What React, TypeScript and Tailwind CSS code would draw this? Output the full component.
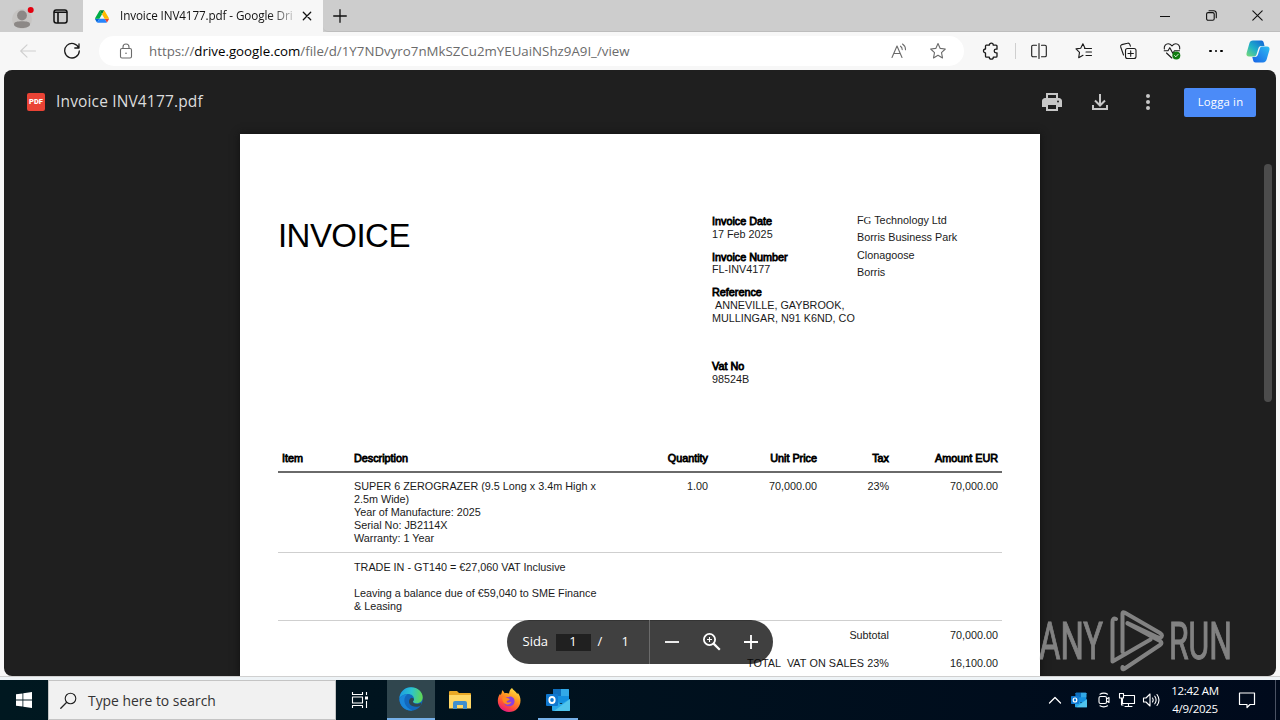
import React from "react";

interface IconProps {
  size?: number;
  box?: string;
  className?: string;
  children: React.ReactNode;
}

const Icon = ({ size = 18, box = "0 0 18 18", className = "", children }: IconProps) => (
  <svg
    width={size}
    height={size}
    viewBox={box}
    fill="none"
    stroke="currentColor"
    strokeWidth={1.1}
    strokeLinecap="round"
    strokeLinejoin="round"
    className={`shrink-0 ${className}`}
  >
    {children}
  </svg>
);

const STAR = "M9 1.6l2.2 4.8 5.1.6-3.8 3.6 1 5.3L9 13.3l-4.500 2.6 1-5.300L1.700 7l5.100-.6z";

const DriveLogo = () => (
  <svg width="14" height="13" viewBox="0 0 87.300 78" className="shrink-0">
    <path d="M6.600 66.850l3.850 6.650c.8 1.400 1.950 2.500 3.300 3.300l13.750-23.800H0c0 1.550.4 3.100 1.200 4.500z" fill="#0066da" />
    <path d="M43.650 25L29.900 1.200c-1.350.8-2.500 1.900-3.300 3.300L1.200 48.500A9 9 0 0 0 0 53h27.500z" fill="#00ac47" />
    <path d="M73.550 76.800c1.350-.8 2.500-1.900 3.300-3.300l1.600-2.750L86.100 57.500c.8-1.400 1.200-2.950 1.200-4.500H59.800l5.850 11.500z" fill="#ea4335" />
    <path d="M43.650 25L57.400 1.200C56.050.4 54.500 0 52.900 0H34.400c-1.600 0-3.150.45-4.500 1.200z" fill="#00832d" />
    <path d="M59.800 53H27.500L13.750 76.800c1.350.8 2.900 1.200 4.500 1.200h50.800c1.600 0 3.150-.45 4.500-1.200z" fill="#2684fc" />
    <path d="M73.400 26.500L60.700 4.500c-.8-1.400-1.950-2.500-3.300-3.300L43.650 25 59.800 53h27.450c0-1.550-.4-3.100-1.200-4.500z" fill="#ffba00" />
  </svg>
);

const OutlookLogo = ({ width, height }: { width: number; height: number }) => (
  <svg width={width} height={height} viewBox="0 0 24 22" className="shrink-0">
    <rect x="7" y="0" width="16" height="14" rx="1" fill="#1490df" />
    <path d="M7 1a1 1 0 0 1 1-1h7v7H7z" fill="#0f6fbe" />
    <path d="M15 0h7a1 1 0 0 1 1 1v6h-8z" fill="#32a9e7" />
    <path d="M6 10l9 5 9-5v11a1 1 0 0 1-1 1H7a1 1 0 0 1-1-1z" fill="#28a8ea" />
    <path d="M24 10L8 22h15a1 1 0 0 0 1-1z" fill="#50c4ec" />
    <rect x="0" y="5" width="12" height="12" rx="1" fill="#0f78d0" />
    <ellipse cx="6" cy="11" rx="2.700" ry="3" fill="none" stroke="#fff" strokeWidth="1.800" />
  </svg>
);

const TabStrip = () => (
  <div className="flex h-8 items-stretch bg-[#cdcdcd] text-[#111]">
    <div className="flex w-[44px] items-center justify-center">
      <svg width="22" height="22" viewBox="0 0 22 22" className="mt-[3px] ml-[2px]">
        <circle cx="10" cy="12" r="10" fill="#c6c4c2" />
        <circle cx="10" cy="8.500" r="4.900" fill="#8c8886" />
        <path d="M2 17.500c0-2.600 3-3.200 8-3.200s8 .6 8 3.200c0 2-4 3.500-8 3.500s-8-1.500-8-3.500z" fill="#8c8886" />
        <circle cx="18.700" cy="3.100" r="3" fill="#e3000f" />
      </svg>
    </div>
    <div className="flex w-[39px] items-center rounded-br-[5px] pl-[9px]">
      <Icon size={15} box="0 0 15 15">
        <rect x="1" y="1" width="13" height="13" rx="2.200" strokeWidth="1.500" />
        <path d="M1.500 3.200h12M5 4v9.500" strokeWidth="1.600" />
      </Icon>
    </div>
    <div className="flex w-[240px] items-center bg-[#f7f7f7] pl-[12px]">
      <DriveLogo />
      <div className="ml-[11px] w-[174px] whitespace-nowrap bg-gradient-to-r from-[#111] from-85% to-[#c8c8c8] bg-clip-text font-['Open_Sans',sans-serif] text-[11.700px] tracking-[-0.110px] text-transparent">
        Invoice INV4177.pdf - Google Dri
      </div>
      <Icon size={10} box="0 0 10 10" className="ml-[8px]">
        <path d="M1.300 1.300l7.400 7.400M8.700 1.300L1.300 8.700" strokeWidth="1.300" />
      </Icon>
    </div>
    <div className="flex flex-1 items-center rounded-bl-[5px] border-b border-[#bdbdbd] pl-[10px]">
      <Icon size={14} box="0 0 14 14">
        <path d="M7 .7v12.600M.7 7h12.600" strokeWidth="1.300" />
      </Icon>
    </div>
    <div className="flex items-center border-b border-[#bdbdbd]">
      <div className="flex w-[46px] justify-center">
        <Icon size={10} box="0 0 10 10"><path d="M0 5.500h10" /></Icon>
      </div>
      <div className="flex w-[46px] justify-center">
        <Icon size={11} box="0 0 11 11">
          <rect x=".6" y="2.600" width="7.600" height="7.600" rx="1.500" />
          <path d="M3 .8h4.700a2.500 2.500 0 0 1 2.600 2.500v4.500" />
        </Icon>
      </div>
      <div className="flex w-[46px] justify-center">
        <Icon size={11} box="0 0 11 11"><path d="M.8.8l9.400 9.400M10.200.8L.8 10.200" /></Icon>
      </div>
    </div>
  </div>
);

const Toolbar = () => (
  <div className="flex h-[38px] items-center bg-[#f7f7f7] text-[#1a1a1a]">
    <div className="flex w-[56px] justify-center text-[#cfcfcf]">
      <Icon><path d="M16.500 9H1.800M8 2.800L1.700 9 8 15.200" /></Icon>
    </div>
    <div className="flex w-[43px] pl-[7px]">
      <Icon><path d="M15.800 6A7.300 7.300 0 1 0 16.300 9M16 1.800V6h-4.200" strokeWidth="1.300" /></Icon>
    </div>
    <div className="flex h-[30px] w-[865px] items-center rounded-full bg-white text-[#6b6b6b]">
      <Icon size={16} box="0 0 16 16" className="ml-[19px]">
        <rect x="2.500" y="5.500" width="11" height="9.500" rx="1.500" />
        <path d="M5 5.500V4a3 3 0 0 1 6 0v1.500" />
        <circle cx="8" cy="10.300" r=".8" fill="currentColor" stroke="none" />
      </Icon>
      <div className="mt-px ml-[15px] flex-1 whitespace-nowrap font-['Open_Sans',sans-serif] text-[13.300px]">
        https://<span className="text-black">drive.google.com</span>/file/d/1Y7NDvyro7nMkSZCu2mYEUaiNShz9A9I_/view
      </div>
      <Icon className="mr-[21px]">
        <path d="M2 15.500L7 4l5 11.500M3.800 11.500h6.400M10.500 4.200c1.200.8 1.700 2 1.700 3.400M12.500 2c2 1.300 3 3.300 3 5.800" />
      </Icon>
      <Icon className="mr-[17px]"><path d={STAR} /></Icon>
    </div>
    <div className="flex w-[51px] justify-center pl-[3px]">
      <Icon>
        <path
          d="M4 3.200h3.300a2 2 0 0 1 4 0H14a1 1 0 0 1 1 1v3h-1a1.800 1.800 0 0 0 0 3.600h1v3.400a1 1 0 0 1-1 1h-2.700a2 2 0 0 1-4 0H4.500a1 1 0 0 1-1-1v-3.200a2 2 0 0 1 0-4V4.200a1 1 0 0 1 .5-1z"
          strokeWidth="1.300"
        />
      </Icon>
    </div>
    <div className="h-[16px] w-px bg-[#cfcfcf]" />
    <div className="flex w-[46px] justify-center">
      <Icon>
        <path d="M6.500 3.200H3a1.300 1.300 0 0 0-1.300 1.300v9A1.300 1.300 0 0 0 3 14.800h3.500M11.500 3.200H15a1.300 1.300 0 0 1 1.300 1.300v9a1.300 1.300 0 0 1-1.300 1.300h-3.500M9 1.500v15" />
      </Icon>
    </div>
    <div className="flex w-[44px] justify-center">
      <Icon>
        <path d="M10 6.300L7.900 1.700 5.700 6.300l-4.700.6 3.500 3.500-.8 5.300L8 13.300M9.500 6.500h7M11 10h5.500M11 13.500h5.500" />
      </Icon>
    </div>
    <div className="flex w-[44px] justify-center">
      <Icon>
        <rect x="6.500" y="6.500" width="10.500" height="10" rx="2" />
        <path d="M11.700 8.800v5.400M9 11.500h5.400M4.500 13L1.700 5a2 2 0 0 1 1.200-2.400l5.500-1.400a2 2 0 0 1 2.400 1.200l.6 1.800" />
      </Icon>
    </div>
    <div className="flex w-[44px] justify-center">
      <Icon>
        <path d="M1.300 7C.8 3.500 3 1.700 5.200 1.700 7 1.700 8 2.700 9 3.800c1-1.100 2-2.100 3.800-2.100C15 1.700 17.200 3.500 16.700 7M1.200 8.700H5l1.800-3 3 5.600 1.700-2.600h5M3.500 11L8.800 16" />
        <circle cx="13.300" cy="13.500" r="4" fill="#107c10" stroke="none" />
        <path d="M11.600 13.600l1.200 1.200 2.300-2.400" stroke="#fff" strokeWidth=".9" />
      </Icon>
    </div>
    <div className="flex w-[44px] justify-center gap-[2.500px]">
      <span className="size-[2.700px] rounded-full bg-black" />
      <span className="size-[2.700px] rounded-full bg-black" />
      <span className="size-[2.700px] rounded-full bg-black" />
    </div>
    <div className="flex flex-1 justify-center pr-[2px]">
      <svg width="24" height="23" viewBox="0 0 24 23">
        <defs>
          <linearGradient id="cpa" x1="0" y1="1" x2="1" y2="0">
            <stop offset="0" stopColor="#7bdc74" />
            <stop offset=".45" stopColor="#1fb0c8" />
            <stop offset="1" stopColor="#1260d8" />
          </linearGradient>
          <linearGradient id="cpb" x1="0" y1="1" x2="1" y2="0">
            <stop offset="0" stopColor="#1763e6" />
            <stop offset=".6" stopColor="#2597ee" />
            <stop offset="1" stopColor="#2cc0f0" />
          </linearGradient>
        </defs>
        <path d="M7 .6h8.500c1.300 0 2 1 2.300 2.300L18.500 6h-3c-2 0-2.700 1-3.300 3l-1.700 5.500c-.5 1.500-1.500 2-3 2H3c-2 0-3-1.500-2.400-3.600l2.600-9C3.900 1.600 5 .6 7 .6z" fill="url(#cpa)" />
        <path d="M17 22.500H9.500c-1.300 0-2-1-2.400-2.300L6.300 17h2.500c2 0 2.700-1 3.300-3l1.700-5.500c.5-1.500 1.300-2 2.800-2H21c2 0 3 1.500 2.400 3.600l-2.600 9c-.6 2.300-1.800 3.400-3.800 3.400z" fill="url(#cpb)" />
      </svg>
    </div>
  </div>
);

const ViewerHeader = () => (
  <div className="flex h-[64px] shrink-0 items-center text-[#d6d6d6]">
    <div className="ml-[23px] flex size-[18px] items-center justify-center rounded-[2px] bg-[#ea4335] font-['Roboto',sans-serif] text-[7.500px] font-black text-white">
      PDF
    </div>
    <div className="ml-[11px] flex-1 font-['Open_Sans',sans-serif] text-[15.500px] tracking-[0.150px] text-[#dcdcdc]">Invoice INV4177.pdf</div>
    <div className="flex w-[48px] justify-center">
      <svg width="24" height="24" viewBox="0 0 24 24" fill="#c7c7c7">
        <path d="M19 8h-1V3H6v5H5c-1.660 0-3 1.340-3 3v6h4v4h12v-4h4v-6c0-1.660-1.340-3-3-3zM8 5h8v3H8V5zm8 12v2H8v-4h8v2zm2-2v-2H6v2H4v-4c0-.55.45-1 1-1h14c.55 0 1 .45 1 1v4h-2z" />
        <path d="M3.500 9.500h17v3.500h-17zM3.500 12h3v3.500h-3zM17.500 12h3v3.500h-3z" />
        <circle cx="18" cy="11.500" r="1" fill="#1f1f1f" />
      </svg>
    </div>
    <div className="flex w-[48px] justify-center">
      <svg width="24" height="24" viewBox="0 0 24 24" fill="none" stroke="#c7c7c7" strokeWidth="2">
        <path d="M12 4v11M7 10.500l5 5 5-5M5 15v4h14v-4" />
      </svg>
    </div>
    <div className="flex w-[48px] flex-col items-center gap-[2px]">
      <span className="size-[4px] rounded-full bg-[#c7c7c7]" />
      <span className="size-[4px] rounded-full bg-[#c7c7c7]" />
      <span className="size-[4px] rounded-full bg-[#c7c7c7]" />
    </div>
    <div className="mr-[20px] ml-[12px] flex h-[29px] w-[72px] items-center justify-center rounded-[2px] bg-[#4b8bf8] pl-px font-['Open_Sans',sans-serif] text-[11.300px] tracking-[0.200px] text-white">
      Logga in
    </div>
  </div>
);

const Label = ({ children }: { children: React.ReactNode }) => (
  <div className="[-webkit-text-stroke:0.8px_#000]">{children}</div>
);

const COLS = "grid grid-cols-[76px_255px_99px_109px_72px_109px] pr-[4px]";

const Invoice = () => (
  <div className="h-[542px] w-[800px] overflow-hidden bg-white pr-[38px] pl-[38px] font-['Liberation_Sans',Arial,sans-serif] text-[10.800px] leading-[13px] whitespace-nowrap text-[#1a1a1a]">
    <div className="flex h-[317px]">
      <div className="w-[434px] pt-[82px] text-[33px] leading-[40px] tracking-[-0.550px] text-black">INVOICE</div>
      <div className="w-[145px] pt-[81px]">
        <div className="h-[35px]">
          <Label>Invoice Date</Label>
          17 Feb 2025
        </div>
        <div className="h-[36px]">
          <div className="relative top-px"><Label>Invoice Number</Label></div>
          FL-INV4177
        </div>
        <div className="h-[74px]">
          <Label>Reference</Label>
          <div className="pl-[3px]">ANNEVILLE, GAYBROOK,</div>
          MULLINGAR, N91 K6ND, CO
        </div>
        <Label>Vat No</Label>
        98524B
      </div>
      <div className="pt-[78px] leading-[17.400px]">
        <div>F<span className="font-['Liberation_Serif',serif]">G</span> Technology Ltd</div>
        <div>Borris Business Park</div>
        <div>Clonagoose</div>
        <div>Borris</div>
      </div>
    </div>
    <div className={`${COLS} h-[22px] border-b-2 border-[#6a6a6a] pt-px text-right`}>
      <div className="pl-[4px] text-left"><Label>Item</Label></div>
      <div className="text-left"><Label>Description</Label></div>
      <Label>Quantity</Label>
      <Label>Unit Price</Label>
      <Label>Tax</Label>
      <Label>Amount EUR</Label>
    </div>
    <div className={`${COLS} h-[80px] border-b border-[#cfcfcf] pt-[7px] text-right`}>
      <div />
      <div className="text-left">
        SUPER 6 ZEROGRAZER (9.5 Long x 3.4m High x<br />
        2.5m Wide)<br />
        Year of Manufacture: 2025<br />
        Serial No: JB2114X<br />
        Warranty: 1 Year
      </div>
      <div>1.00</div>
      <div>70,000.00</div>
      <div>23%</div>
      <div>70,000.00</div>
    </div>
    <div className={`${COLS} h-[68px] border-b border-[#cfcfcf] pt-[8px]`}>
      <div />
      <div>
        TRADE IN - GT140 = €27,060 VAT Inclusive<br />
        <br />
        Leaving a balance due of €59,040 to SME Finance<br />
        &amp; Leasing
      </div>
    </div>
    <div className="grid grid-cols-[611px_109px] text-right leading-[28px]">
      <div>Subtotal</div>
      <div>70,000.00</div>
      <div className="tracking-[0.080px] whitespace-pre">TOTAL  VAT ON SALES 23%</div>
      <div>16,100.00</div>
    </div>
  </div>
);

const PageControls = () => (
  <div className="absolute top-[550px] left-[502.500px] flex h-[44px] w-[266.500px] items-center rounded-full bg-black/75 font-['Open_Sans',sans-serif] text-[13px] text-white">
    <div className="w-[49px] pl-[16px]">Sida</div>
    <div className="flex h-[17px] w-[35px] items-center justify-center bg-[#202020]">1</div>
    <div className="w-[31px] pl-[7px]">/</div>
    <div className="w-[27px]">1</div>
    <div className="h-full w-px bg-[#6b6b6b]" />
    <svg width="14" height="14" viewBox="0 0 14 14" className="ml-[15px]" stroke="#fff" strokeWidth="1.800">
      <path d="M0 7h14" />
    </svg>
    <svg width="20" height="20" viewBox="0 0 20 20" className="ml-[23px]" fill="none" stroke="#fff" strokeWidth="1.800">
      <circle cx="7.500" cy="7.500" r="5.600" />
      <path d="M11.600 11.600l6.200 6.200" strokeWidth="2.200" />
      <path d="M7.500 5v5M5 7.500h5" strokeWidth="1.100" />
    </svg>
    <svg width="14" height="14" viewBox="0 0 14 14" className="ml-[22px]" stroke="#fff" strokeWidth="1.800">
      <path d="M0 7h14M7 0v14" />
    </svg>
  </div>
);

const Watermark = () => (
  <svg width="200" height="64" viewBox="0 0 200 64" className="absolute top-[608px] left-[1038px] opacity-50">
    <g fill="#e4e4e4" stroke="#e4e4e4" strokeWidth="1" fontFamily="Roboto, sans-serif" fontSize="51">
      <text x="1" y="51" textLength="64" lengthAdjust="spacingAndGlyphs">ANY</text>
      <text x="131" y="51" textLength="63" lengthAdjust="spacingAndGlyphs">RUN</text>
    </g>
    <path
      d="M78 11q-3.500-1.500-3.500 3v39.500l38-22M84.500 44V5.500q0-2 2-1L122 25q4 2.500 0 5l-4-1.500L89.500 15M89.500 15.500L122 33q3 2 0 4L86 61q-2 1-1.500-2"
      fill="none"
      stroke="#e4e4e4"
      strokeWidth="4"
      strokeLinejoin="round"
      strokeLinecap="round"
    />
  </svg>
);

const Taskbar = () => (
  <div className="flex h-10 items-stretch bg-gradient-to-r from-[#001820] to-[#000a1c] text-white">
    <div className="flex w-12 items-center justify-center">
      <svg width="16" height="16" viewBox="0 0 16 16" fill="#fff">
        <path d="M0 2.300l6.500-.9v6.200H0zM7.300 1.300L16 0v7.600H7.300zM0 8.400h6.500v6.200L0 13.700zM7.300 8.400H16V16l-8.700-1.300z" />
      </svg>
    </div>
    <div className="flex w-[288px] items-center border border-[#c4c4c4] bg-[#f1f1f1] text-[#222]">
      <Icon size={17} box="0 0 17 17" className="ml-[11px]">
        <circle cx="10.500" cy="6.500" r="5.300" />
        <path d="M6.500 10.500L.8 16.200" strokeWidth="1.300" />
      </Icon>
      <div className="mt-[2px] ml-[11px] font-['Open_Sans',sans-serif] text-[13.900px] text-[#333]">Type here to search</div>
    </div>
    <div className="flex w-[51px] items-center pl-[15px]">
      <Icon size={18} box="0 0 18 18">
        <path d="M1.500 1v2.500h10V1M1.500 17v-2.500h10V17M1.500 6h10v6h-10zM15.500 1v3M15.500 10v7" strokeLinecap="butt" />
        <path d="M14 5.500h3v3h-3z" fill="#fff" stroke="none" />
      </Icon>
    </div>
    <div className="flex w-12 items-center justify-center border-b-2 border-[#76b0e8] bg-[#30464e]">
      <svg width="24" height="24" viewBox="0 0 24 24">
        <defs>
          <linearGradient id="edgeTop" x1="0" y1=".4" x2="1" y2=".5">
            <stop offset="0" stopColor="#1b9de2" />
            <stop offset=".5" stopColor="#2cc3cf" />
            <stop offset="1" stopColor="#62d84e" />
          </linearGradient>
        </defs>
        <circle cx="12" cy="12" r="11.700" fill="#1268bd" />
        <path d="M.4 11.500C.9 5 5.800.3 12 .3c6.700 0 11.700 4.600 11.700 10 0 3.700-2.700 6-6 6-2.200 0-3.700-.8-3.700-1.600 0-.6 1-1 1-3 0-2.500-2.500-4.800-6-4.800-4 0-7.500 2.200-8.600 4.600z" fill="url(#edgeTop)" />
        <path d="M8.600 7.300C5.700 9 4.900 12.200 5.600 15.300c.9 4 4 7 8 8-6 1.300-12.800-3.300-13.200-11.300C1.500 9 5 7.300 8.600 7.300z" fill="#1a86d9" />
        <path d="M13.900 14.700c0 1 1.500 2.200 4.300 2.200 2 0 3.300-.6 4.300-1.300l-.8 3.100c-3 1.600-9 1.400-11-1.700-1.300-2-1-4.800 1.600-6.300 1.500 0 2.700.8 2.600 1.800 0 .9-1 1.400-1 2.200z" fill="#30464e" />
      </svg>
    </div>
    <div className="flex w-[49px] items-center justify-center">
      <svg width="22" height="20" viewBox="0 0 22 20">
        <path d="M0 2a1 1 0 0 1 1-1h7l2 2h11a1 1 0 0 1 1 1v14H0z" fill="#e9a825" />
        <path d="M0 5h22v13.500H0z" fill="#ffd766" />
        <path d="M4 19v-6a2 2 0 0 1 2-2h10a2 2 0 0 1 2 2v6h-4v-4H8v4z" fill="#3f8fd0" />
      </svg>
    </div>
    <div className="flex w-[49px] items-center justify-center">
      <svg width="24" height="24" viewBox="0 0 24 24">
        <defs>
          <linearGradient id="fox" x1=".8" y1="0" x2=".3" y2="1">
            <stop offset="0" stopColor="#ffe84a" />
            <stop offset=".4" stopColor="#ff9a1f" />
            <stop offset=".75" stopColor="#ff4a3d" />
            <stop offset="1" stopColor="#e31587" />
          </linearGradient>
        </defs>
        <path d="M15 0c1 2 4 3.500 5.300 6 .4-.4.4-1 .2-1.600 2 2.200 3 5 3 8C23.500 19 18.500 24 12 24S.8 19 .8 12.800c0-3 1-5.600 2.500-7.300 0 .6 0 1.200.3 1.700C4.600 5.500 5 4 5 2.300c1.300.7 2 1.700 2.500 3C9 4.700 10.500 4.900 12 5.500 12.300 3.300 13.300 1.200 15 0z" fill="url(#fox)" />
        <path d="M7.500 10.300c1.300-1.500 2.400-1.300 4-1 1-1.300 3.500-1 5 .8 2.300 3 .8 8-4.300 8.200-4.500 0-6.400-4-4.700-8z" fill="#8a3fe0" />
        <path d="M5.500 9c2-.9 4 .2 5.500 1.300.9.600 2 .5 1.700 1.300-.6 1.200-2.700 1-3.200 2.300 1 1.300 3.700.5 4.900-.5-.3 2.300-3 3.500-5.200 2.800-3-1-4.500-4-3.700-7.200z" fill="#ff8a1f" />
      </svg>
    </div>
    <div className="flex w-[49px] flex-col items-center">
      <div className="flex flex-1 items-center pt-[2px]">
        <OutlookLogo width={24} height={22} />
      </div>
      <div className="h-[2px] w-[40px] bg-[#76b0e8]" />
    </div>
    <div className="flex flex-1 items-center justify-end">
      <Icon size={14} box="0 0 14 14" className="mr-[9px]"><path d="M1.500 10L7 4.500l5.500 5.500" strokeWidth="1.300" /></Icon>
      <OutlookLogo width={16} height={16} />
      <Icon size={16} box="0 0 16 16" className="ml-[9px]">
        <rect x="3" y="4.500" width="7.500" height="7" rx="1.500" />
        <path d="M10.500 7l2.500-1.500v5L10.500 9M4 2.200C6 .8 9.500.8 11.500 2.200M4 13.800c2 1.400 5.500 1.400 7.500 0" />
      </Icon>
      <Icon size={18} box="0 0 18 18" className="ml-[6px]">
        <path d="M5.500 4.500h11v8H4.500V8M7 15.500h7M10.500 12.500v3M1.500 2.500h4V7h-4zM3.500 7v7h1.500" />
      </Icon>
      <Icon size={18} box="0 0 18 18" className="ml-[6px]">
        <path d="M1.500 7h2.500l4-4v12L4 11H1.500zM10.500 7c.8 1.200.8 2.800 0 4M12.800 5.200c1.600 2.300 1.600 5.300 0 7.600M15 3.500c2.400 3.300 2.400 7.700 0 11" />
      </Icon>
      <div className="ml-[2px] w-[66px] text-center font-['Open_Sans',sans-serif] text-[11.500px] leading-[18px] tracking-[-0.300px] whitespace-nowrap">
        12:42 AM<br />
        4/9/2025
      </div>
      <Icon size={18} box="0 0 18 18" className="ml-[10px]">
        <path d="M1.500 2h15v11.500H12L9 16.500v-3H1.500z" strokeWidth="1.200" />
      </Icon>
      <div className="mr-[4px] ml-[19px] h-10 w-px bg-[#4a5263]" />
    </div>
  </div>
);

export default function App() {
  return (
    <div className="relative flex h-[720px] w-[1280px] flex-col overflow-hidden bg-[#f7f7f7]">
      <TabStrip />
      <Toolbar />
      <div className="relative mx-[4px] flex h-[606px] flex-col overflow-hidden rounded-[8px] bg-[#1f1f1f]">
        <ViewerHeader />
        <div className="flex flex-1">
          <div className="ml-[236px] shadow-[0_0_8px_#111]">
            <Invoice />
          </div>
          <div className="mt-[30px] ml-[224px] h-[238px] w-[8px] rounded-full bg-[#4c4c4c]" />
        </div>
        <PageControls />
      </div>
      <div className="h-[4px] border-t border-[#d0d0d0] bg-[#eef3f6]" />
      <Taskbar />
      <Watermark />
    </div>
  );
}
